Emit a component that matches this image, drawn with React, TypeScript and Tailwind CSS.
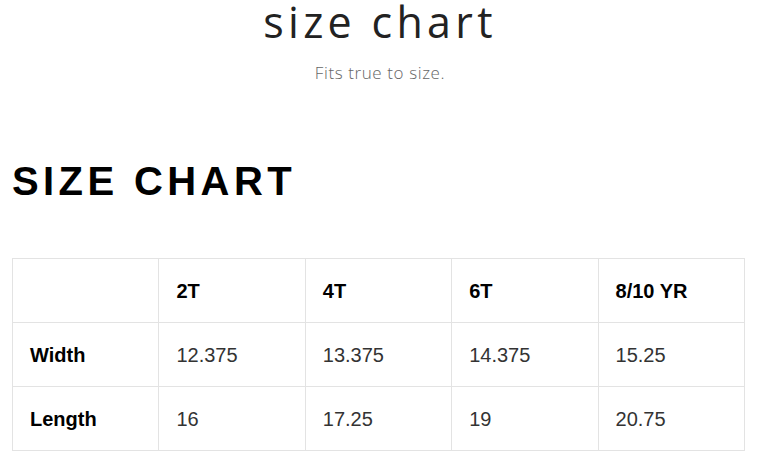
const sizes = ['2T', '4T', '6T', '8/10 YR']

const rows = [
  { label: 'Width', values: ['12.375', '13.375', '14.375', '15.25'] },
  { label: 'Length', values: ['16', '17.25', '19', '20.75'] },
]

export default function App() {
  return (
    <main className="min-h-screen bg-white px-[12px]">
      {/* page title */}
      <div className="flex flex-col items-center">
        <h1 className="font-['Open_Sans',sans-serif] text-[43px] font-normal leading-none tracking-[0.1em] text-[#222222]">
          size chart
        </h1>
        <p className="mt-[19px] font-['Open_Sans',sans-serif] text-[17px] font-light leading-[22px] tracking-[0.6px] text-[#666666]">
          Fits true to size.
        </p>
      </div>

      {/* chart heading */}
      <h2 className="mt-[77px] font-['Liberation_Sans',Arial,sans-serif] text-[40px] font-bold leading-none tracking-[4.4px] text-black">
        SIZE CHART
      </h2>

      {/* size table */}
      <table className="mt-[57px] w-[733px] table-fixed border-collapse font-['Liberation_Sans',Arial,sans-serif] text-[20px]">
        <thead>
          <tr>
            <th className="h-[64px] border border-[#e3e3e3] pl-[17px]" />
            {sizes.map((s) => (
              <th
                key={s}
                className="h-[64px] border border-[#e3e3e3] pl-[17px] text-left font-bold text-black"
              >
                {s}
              </th>
            ))}
          </tr>
        </thead>
        <tbody>
          {rows.map((r) => (
            <tr key={r.label}>
              <td className="h-[64px] border border-[#e3e3e3] pl-[17px] font-bold text-black">
                {r.label}
              </td>
              {r.values.map((v, i) => (
                <td
                  key={i}
                  className="h-[64px] border border-[#e3e3e3] pl-[17px] text-[#333333]"
                >
                  {v}
                </td>
              ))}
            </tr>
          ))}
        </tbody>
      </table>
    </main>
  )
}
